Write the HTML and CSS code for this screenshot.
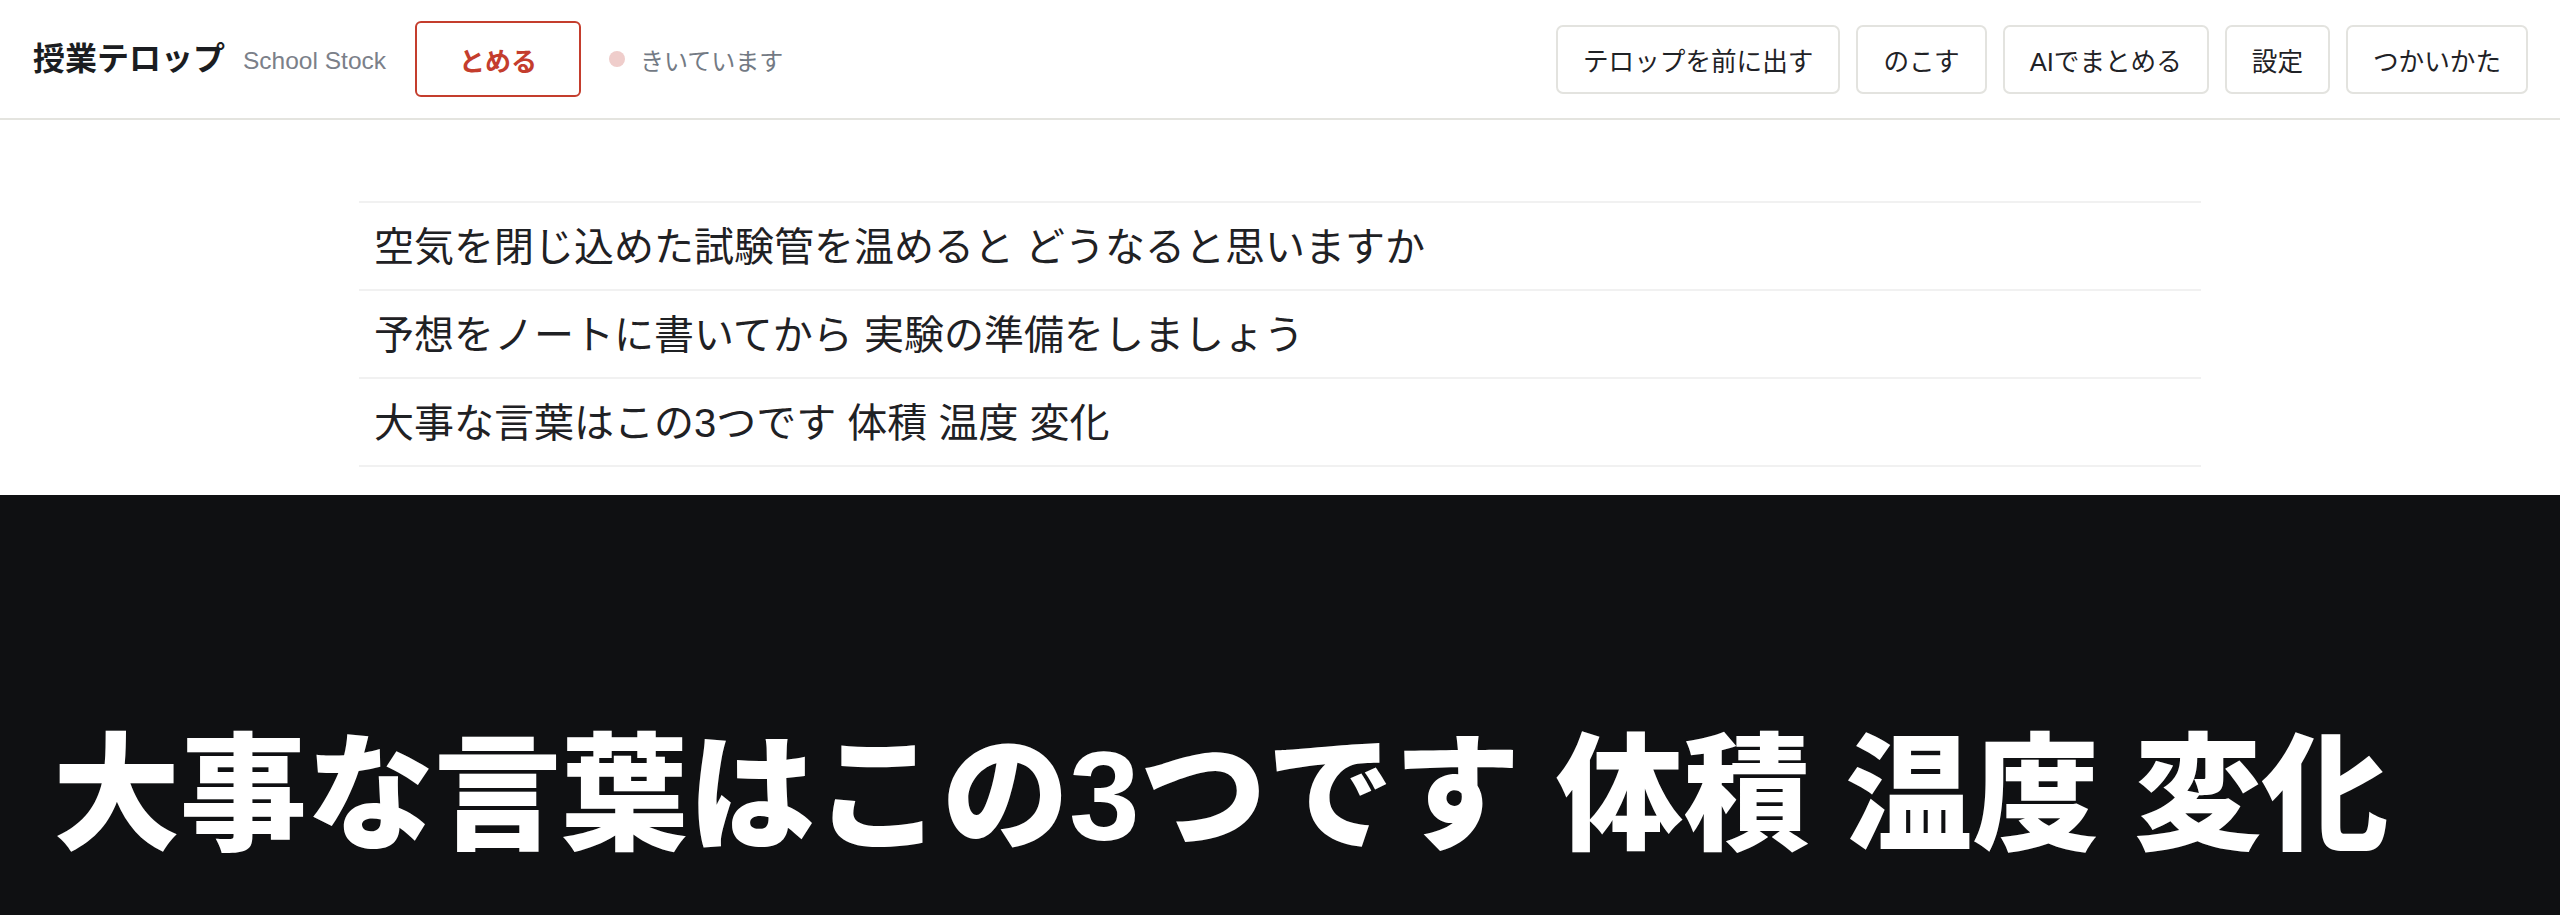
FILE: index.html
```html
<!DOCTYPE html>
<html lang="ja">
<head>
<meta charset="utf-8">
<title>授業テロップ</title>
<link rel="stylesheet" href="styles.css">
</head>
<body>
<div class="page">
  <header class="topbar">
    <div class="brand">授業テロップ</div>
    <div class="sub">School Stock</div>
    <button class="stop">とめる</button>
    <div class="status"><span class="dot"></span><span class="status-text">きいています</span></div>
    <nav class="actions">
      <button class="btn">テロップを前に出す</button>
      <button class="btn">のこす</button>
      <button class="btn">AIでまとめる</button>
      <button class="btn">設定</button>
      <button class="btn">つかいかた</button>
    </nav>
  </header>
  <main class="history">
    <div class="row">空気を閉じ込めた試験管を温めると どうなると思いますか</div>
    <div class="row">予想をノートに書いてから 実験の準備をしましょう</div>
    <div class="row">大事な言葉はこの3つです 体積 温度 変化</div>
  </main>
  <section class="telop">
    <div class="telop-text">大事な言葉はこの3つです 体積 温度 変化</div>
  </section>
</div>
</body>
</html>
```
FILE: styles.css
```css
* { box-sizing: border-box; }
html, body { margin: 0; padding: 0; }
body {
  font-family: "Liberation Sans", "Noto Sans CJK JP", sans-serif;
  background: #ffffff;
  color: #1f2124;
}
.page {
  display: flex;
  flex-direction: column;
  height: 915px;
}
.topbar {
  flex: none;
  height: 120px;
  display: flex;
  align-items: center;
  padding: 0 32px 0 33px;
  border-bottom: 2px solid #e4e4df;
  background: #fff;
}
.brand {
  font-size: 32px;
  font-weight: 700;
  color: #1b1d21;
  line-height: 1;
}
.sub {
  margin-left: 18px;
  font-size: 24.5px;
  color: #7b8089;
  line-height: 1;
  padding-top: 4px;
}
.stop {
  margin-left: 29px;
  height: 76px;
  padding: 0 42px;
  border: 2px solid #c43d2d;
  border-radius: 6px;
  background: #fff;
  color: #c43d2d;
  font-family: inherit;
  font-size: 26px;
  font-weight: 700;
  cursor: pointer;
}
.status {
  margin-left: 28px;
  display: flex;
  align-items: center;
  gap: 15px;
}
.dot {
  width: 16px;
  height: 16px;
  border-radius: 50%;
  background: #efcdcb;
}
.status-text {
  font-size: 24px;
  color: #737a84;
}
.actions {
  margin-left: auto;
  display: flex;
  gap: 16px;
}
.btn {
  height: 69px;
  padding: 0 25px;
  border: 2px solid #e3e3df;
  border-radius: 7px;
  background: #fff;
  color: #1f2226;
  font-family: inherit;
  font-size: 25.6px;
  cursor: pointer;
}
.history {
  flex: none;
  width: 1842px;
  margin: 81px auto 28px;
  border-bottom: 2px solid #f1f1f1;
}
.row {
  border-top: 2px solid #f1f1f1;
  height: 88px;
  padding: 0 15px 4px;
  display: flex;
  align-items: center;
  font-size: 40px;
  color: #1f2124;
  white-space: nowrap;
}
.telop {
  flex: 1;
  background: #0f1012;
  display: flex;
  align-items: flex-end;
  padding: 0 53px 43px;
}
.telop-text {
  color: #ffffff;
  font-size: 127px;
  font-weight: 900;
  line-height: 1.2;
  white-space: nowrap;
}
```
